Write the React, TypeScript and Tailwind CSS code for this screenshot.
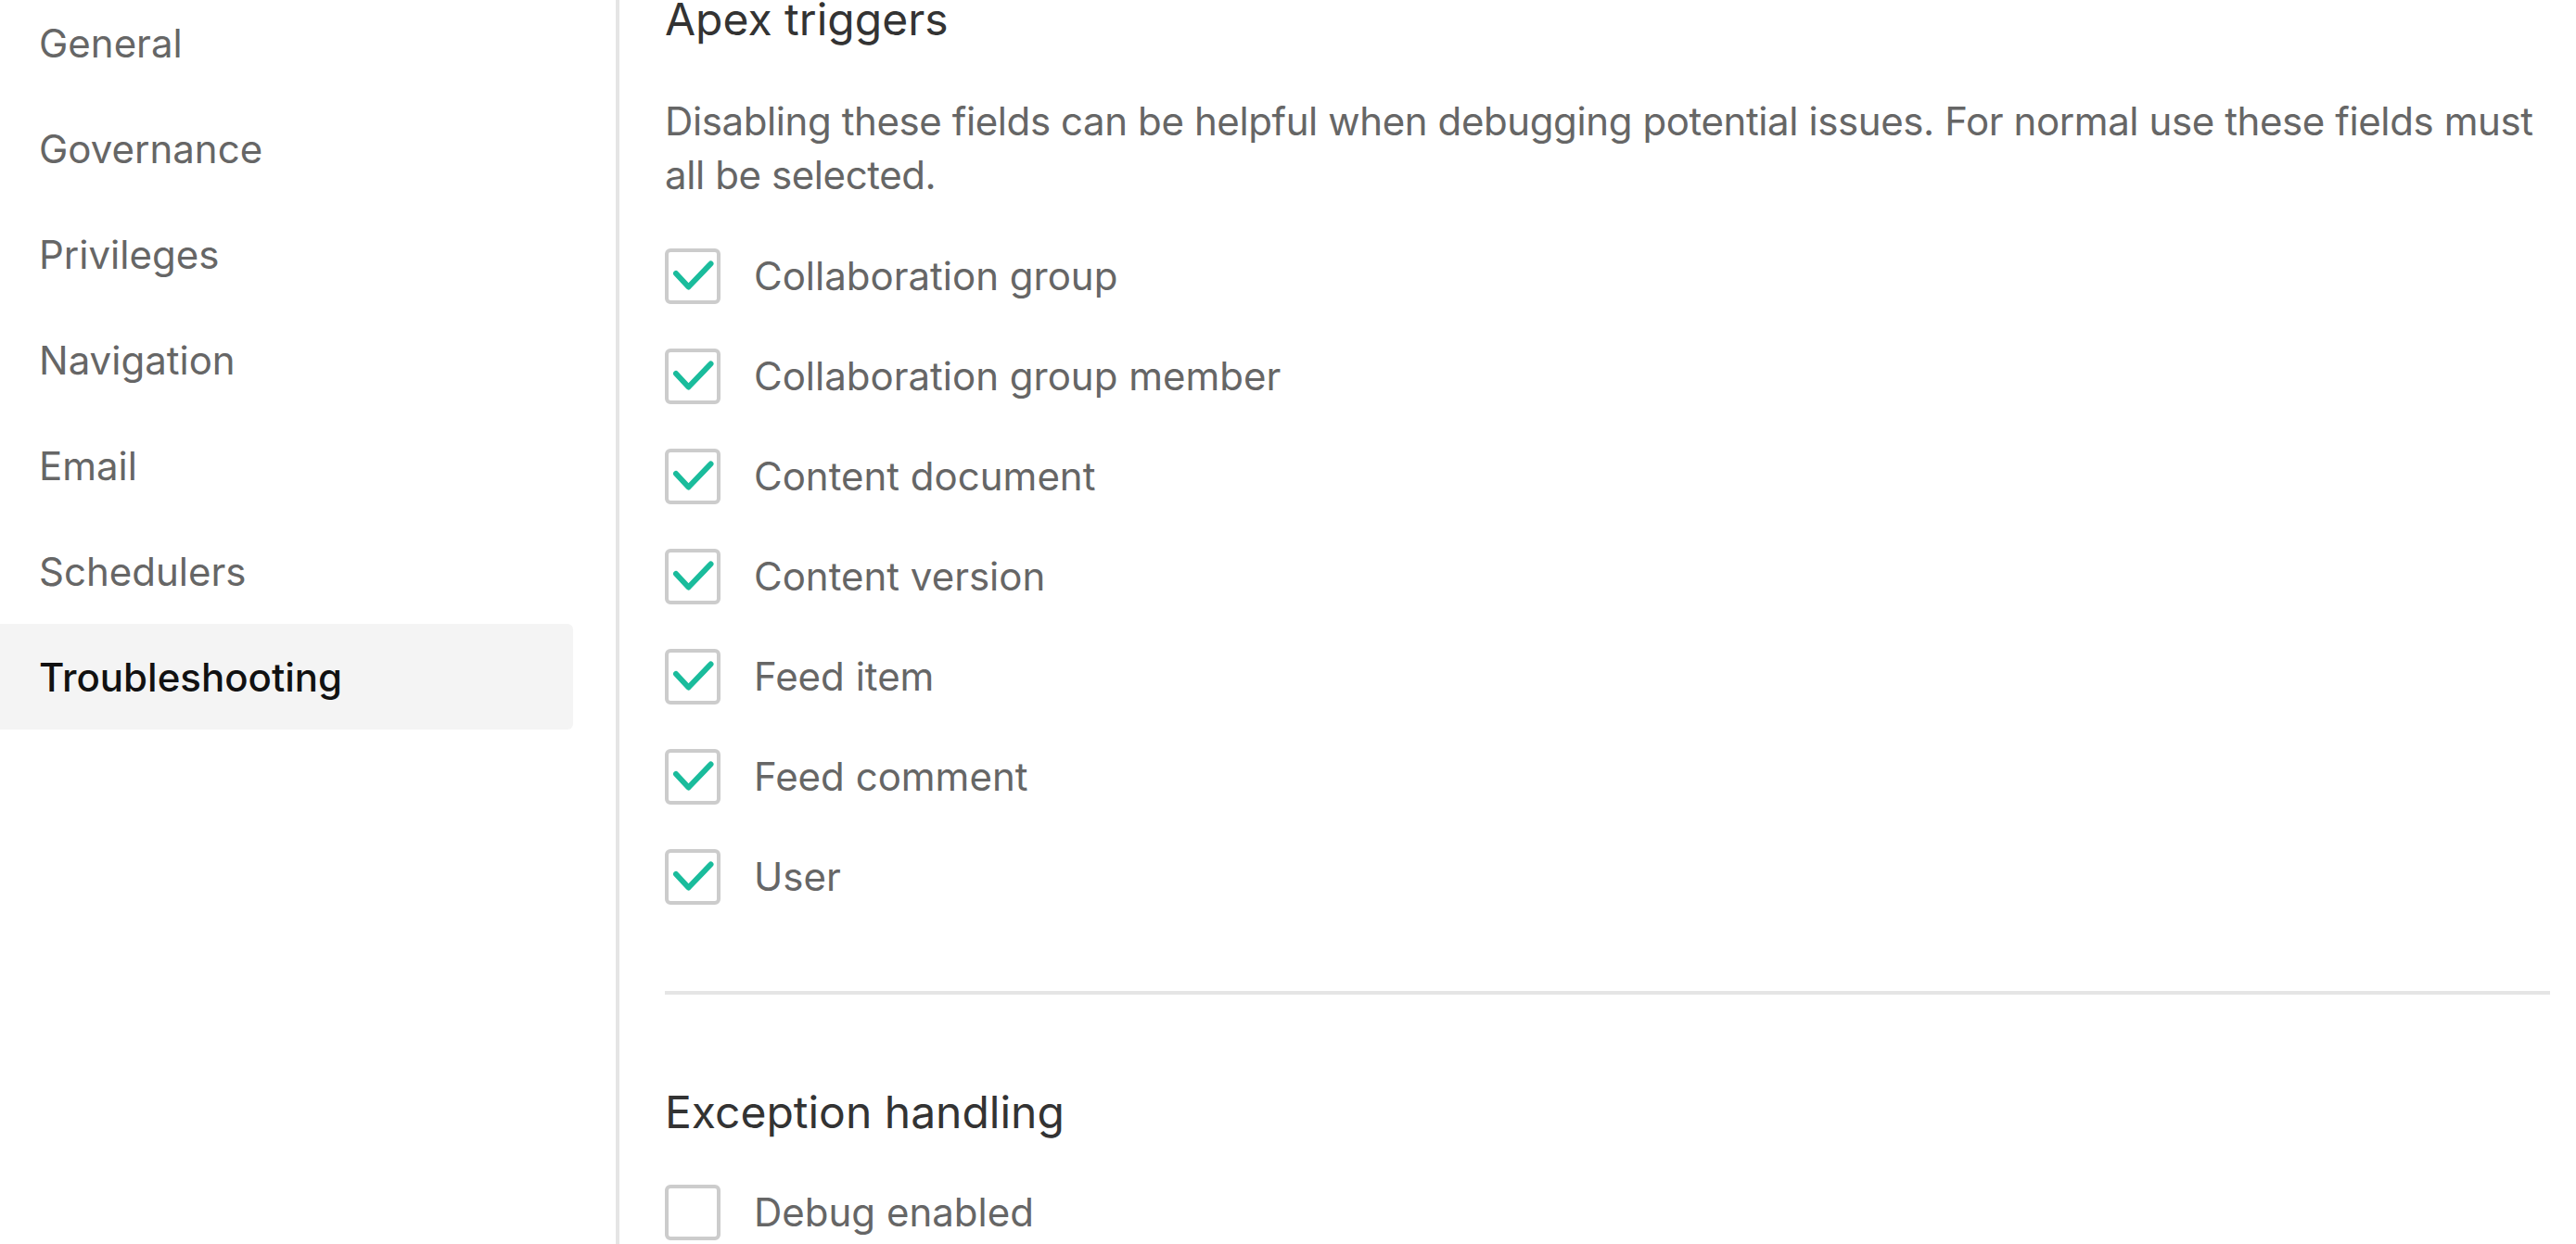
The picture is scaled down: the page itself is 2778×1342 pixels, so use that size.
import React from "react";

const navItems = [
  "General",
  "Governance",
  "Privileges",
  "Navigation",
  "Email",
  "Schedulers",
  "Troubleshooting",
];

const triggerFields = [
  "Collaboration group",
  "Collaboration group member",
  "Content document",
  "Content version",
  "Feed item",
  "Feed comment",
  "User",
];

function Checkbox({ checked }: { checked: boolean }) {
  return (
    <div className="h-[60px] w-[60px] shrink-0 rounded-[6px] border-[4px] border-[#cccccc] bg-white">
      {checked && (
        <svg viewBox="0 0 52 52" className="block h-[52px] w-[52px]" fill="none">
          <path
            d="M8 23 L21.5 37.5 L45.5 12.5"
            stroke="#1abc9c"
            strokeWidth="6"
            strokeLinecap="round"
            strokeLinejoin="round"
          />
        </svg>
      )}
    </div>
  );
}

function CheckRow({ label, checked }: { label: string; checked: boolean }) {
  return (
    <label className="flex h-[108px] items-center">
      <Checkbox checked={checked} />
      <span className="ml-[36px] text-[42px] leading-[58px] text-[#666666]">
        {label}
      </span>
    </label>
  );
}

export default function App() {
  return (
    <div
      className="flex h-[1342px] w-full overflow-hidden bg-white"
      style={{ fontFamily: "Inter, 'Noto Sans', sans-serif" }}
    >
      {/* Sidebar */}
      <nav className="mt-[-11px] w-[618px] shrink-0">
        {navItems.map((item) => {
          const active = item === "Troubleshooting";
          return (
            <div
              key={item}
              className={
                active
                  ? "flex h-[114px] items-center rounded-r-[6px] bg-[#f4f4f4] pl-[42px] text-[42px] font-medium text-[#111111]"
                  : "flex h-[114px] items-center pl-[42px] text-[42px] text-[#666666]"
              }
            >
              {item}
            </div>
          );
        })}
      </nav>

      {/* Content */}
      <main className="ml-[46px] min-w-0 flex-1 border-l-[4px] border-[#e5e5e5] pl-[49px] pr-[28px]">
        <h2 className="mt-[-8px] text-[48px] leading-[58px] font-normal text-[#333333]">
          Apex triggers
        </h2>
        <p className="mt-[52px] text-[42px] leading-[58px] tracking-[-0.4px] text-[#666666]">
          Disabling these fields can be helpful when debugging potential issues.
          For normal use these fields must all be selected.
        </p>
        <div className="mt-[26px] flex flex-col">
          {triggerFields.map((f) => (
            <CheckRow key={f} label={f} checked />
          ))}
        </div>

        <div className="mt-[69px] h-[4px] bg-[#e5e5e5]" />

        <h2 className="mt-[98px] text-[48px] leading-[58px] font-normal text-[#333333]">
          Exception handling
        </h2>
        <div className="mt-[25px]">
          <CheckRow label="Debug enabled" checked={false} />
        </div>
      </main>
    </div>
  );
}
